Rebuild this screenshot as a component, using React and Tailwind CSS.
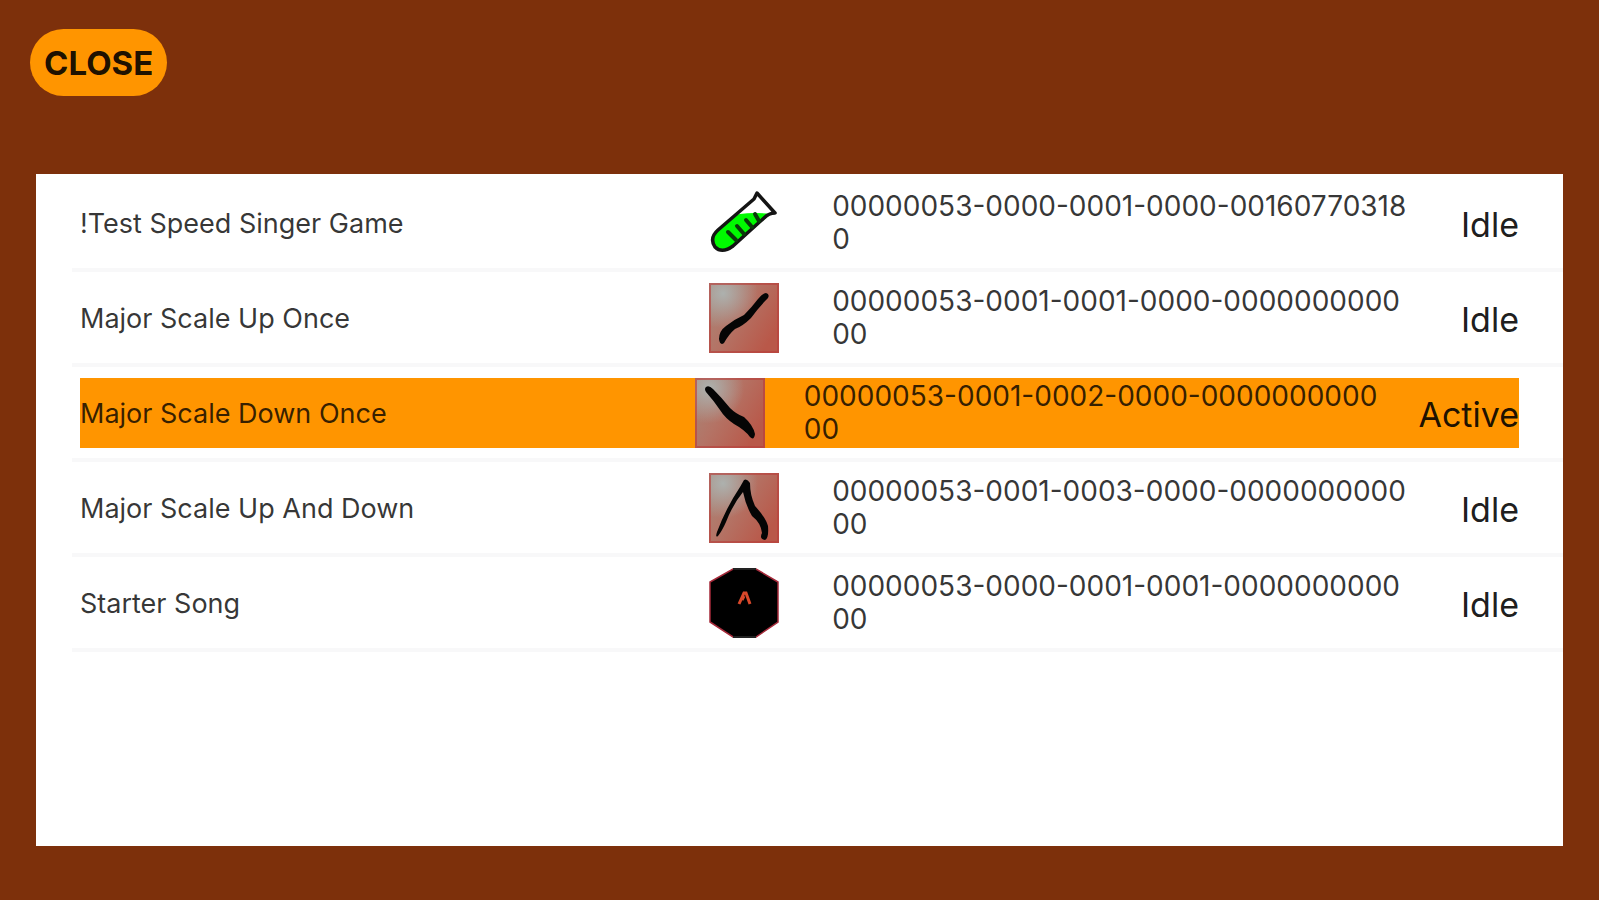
import React, { useState } from 'react';

const songs = [
  { name: '!Test Speed Singer Game', id: '00000053-0000-0001-0000-001607703180', icon: 'tube' },
  { name: 'Major Scale Up Once', id: '00000053-0001-0001-0000-000000000000', icon: 'up' },
  { name: 'Major Scale Down Once', id: '00000053-0001-0002-0000-000000000000', icon: 'down' },
  { name: 'Major Scale Up And Down', id: '00000053-0001-0003-0000-000000000000', icon: 'upDown' },
  { name: 'Starter Song', id: '00000053-0000-0001-0001-000000000000', icon: 'starter' },
];

const TestTubeIcon = () => (
  <svg viewBox="0 0 70 70" className="w-[70px] h-[70px]" aria-hidden="true">
    <path d="M48 5L66 25L58 28L24 58Q13 66 6 59Q0 50 8 42L45 11Z" fill="#fff" />
    <path d="M31 26Q45 24 62 26L57 30L24 58Q13 66 6 59Q1 50 9 42L26 27Z" fill="#00fa00" />
    <path
      d="M48 5L66 25Q60 25 55 30L24 58Q13 66 6 59Q0 50 9 42L45 11Z"
      fill="none"
      stroke="#141414"
      strokeWidth="3.5"
      strokeLinejoin="round"
    />
    <path d="M19 44L27 52M28 38L35 46M37 32L43 39M46 26L50 33" stroke="#0a3a0a" strokeWidth="4" strokeLinecap="round" />
  </svg>
);

const scaleShapes = {
  up: 'M57 10Q61 11 59 15Q49 25 42 35Q34 43 26 46Q20 51 15 60Q11 63 10 56Q10 48 17 43Q26 36 35 32Q43 24 49 16Q54 10 57 10Z',
  down: 'M11 9Q14 7 18 11Q27 20 35 30Q41 36 49 39Q58 47 60 56Q59 63 55 59Q50 52 39 46Q30 40 25 32Q19 23 11 14Q9 11 11 9Z',
  upDown: 'M35 7Q38 5 41 10Q41 22 46 33Q57 45 59 53Q60 65 56 67Q50 66 53 60Q52 50 43 43Q37 33 34 19Q24 31 17 49Q13 58 9 63Q6 65 8 59Q17 35 31 14Z',
};

const ScaleIcon = ({ shape }) => (
  <svg viewBox="0 0 70 70" className="w-[70px] h-[70px]" aria-hidden="true">
    <defs>
      <linearGradient id={`base-${shape}`} x1="0" y1="0" x2="1" y2="0.6">
        <stop offset="0" stopColor="#a7897b" />
        <stop offset="0.5" stopColor="#b47365" />
        <stop offset="1" stopColor="#b95849" />
      </linearGradient>
      <radialGradient id={`shine-${shape}`} cx="0.2" cy="0.15" r="0.5">
        <stop offset="0" stopColor="#adb1ae" />
        <stop offset="1" stopColor="#adb1ae" stopOpacity="0" />
      </radialGradient>
    </defs>
    <rect width="70" height="70" fill={`url(#base-${shape})`} />
    <rect width="70" height="70" fill={`url(#shine-${shape})`} />
    <rect x="1" y="1" width="68" height="68" fill="none" stroke="#b8403c" strokeOpacity="0.65" strokeWidth="2" />
    <path d={scaleShapes[shape]} fill="#050505" />
  </svg>
);

const StarterIcon = () => (
  <svg viewBox="0 0 70 70" className="w-[70px] h-[70px]" aria-hidden="true">
    <path d="M24 1H47L69 14V54L47 69H24L1 54V14Z" fill="#000" stroke="#a52a3a" strokeWidth="1.5" />
    <path d="M24 1H47M24 69H47" stroke="#222" strokeWidth="2" />
    <path d="M30 36L35 25L37 25L41 36M33 32L35 28" fill="none" stroke="#d9482a" strokeWidth="3" />
  </svg>
);

const SongIcon = ({ icon }) => {
  if (icon === 'tube') return <TestTubeIcon />;
  if (icon === 'starter') return <StarterIcon />;
  return <ScaleIcon shape={icon} />;
};

const App = () => {
  const [active, setActive] = useState(2);

  return (
    <div className="min-h-screen flex flex-col items-start bg-[#7d300b] font-['Inter',sans-serif] text-black">
      {/* Header */}
      <header className="pt-[29px] pl-[30px] pb-[78px]">
        <button
          type="button"
          className="h-[67px] px-[14px] pt-[2px] rounded-full bg-[#ff9500] text-[33px] font-bold text-black/90"
        >
          CLOSE
        </button>
      </header>

      {/* Song list */}
      <main className="flex-1 self-stretch mx-9 mb-[54px] pt-[3px] bg-white">
        <ul className="ml-9">
          {songs.map((song, index) => (
            <li key={song.id} className="flex items-center h-[95px] pl-2 pr-11 border-b-4 border-[#f8f8f9]">
              <button
                type="button"
                onClick={() => setActive(index)}
                className={`flex flex-1 items-center justify-between h-[70px] text-left ${index === active ? 'bg-[#ff9500]' : ''}`}
              >
                <span className="w-2/5 pt-[3px] text-[27px] text-black/80">{song.name}</span>
                <SongIcon icon={song.icon} />
                <span className="w-2/5 text-[28px] leading-[33px] break-all text-black/80">{song.id}</span>
                <span className="pt-[3px] text-[34px] text-black/90">{index === active ? 'Active' : 'Idle'}</span>
              </button>
            </li>
          ))}
        </ul>
      </main>
    </div>
  );
};

export default App;
